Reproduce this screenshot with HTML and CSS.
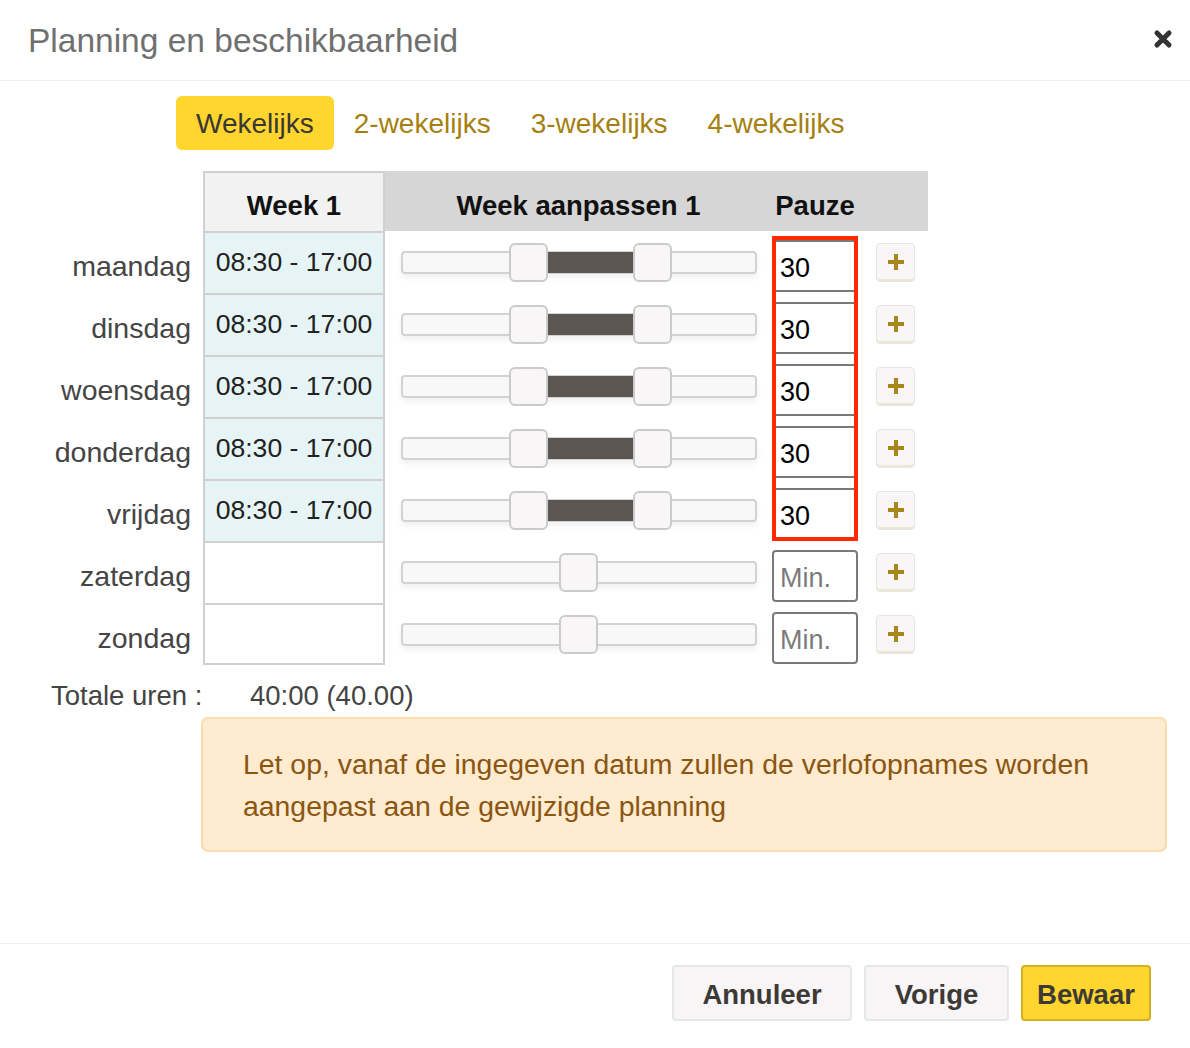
FILE: index.html
```html
<!DOCTYPE html>
<html lang="nl">
<head>
<meta charset="utf-8">
<title>Planning en beschikbaarheid</title>
<link rel="stylesheet" href="styles.css">
</head>
<body>
<div class="modal">
  <header class="modal-header">
    <h1 class="modal-title">Planning en beschikbaarheid</h1>
    <button class="close" aria-label="Sluiten">
      <svg width="20" height="20" viewBox="0 0 20 20"><path d="M4 4 L16 16 M16 4 L4 16" stroke="#333" stroke-width="5" stroke-linecap="round"/></svg>
    </button>
  </header>

  <div class="tabs">
    <span class="tab active">Wekelijks</span>
    <span class="tab">2-wekelijks</span>
    <span class="tab">3-wekelijks</span>
    <span class="tab">4-wekelijks</span>
  </div>

  <div class="grid">
    <div class="hd-empty"></div>
    <div class="hd-week">Week 1</div>
    <div class="hd-gray">Week aanpassen 1</div>
    <div class="hd-gray">Pauze</div>
    <div class="hd-gray"></div>

    <div class="day">maandag</div>
    <div class="time">08:30 - 17:00</div>
    <div class="slider-cell"><div class="slider"><span class="fill" style="left:146px;width:86px"></span><span class="handle" style="left:108px"></span><span class="handle" style="left:232px"></span></div></div>
    <div class="pause-cell"><input class="pause" value="30"></div>
    <div class="plus-cell"><button class="plus"><svg width="18" height="18" viewBox="0 0 18 18"><path d="M9 1 V17 M1 9 H17" stroke="#a8861b" stroke-width="4"/></svg></button></div>

    <div class="day">dinsdag</div>
    <div class="time">08:30 - 17:00</div>
    <div class="slider-cell"><div class="slider"><span class="fill" style="left:146px;width:86px"></span><span class="handle" style="left:108px"></span><span class="handle" style="left:232px"></span></div></div>
    <div class="pause-cell"><input class="pause" value="30"></div>
    <div class="plus-cell"><button class="plus"><svg width="18" height="18" viewBox="0 0 18 18"><path d="M9 1 V17 M1 9 H17" stroke="#a8861b" stroke-width="4"/></svg></button></div>

    <div class="day">woensdag</div>
    <div class="time">08:30 - 17:00</div>
    <div class="slider-cell"><div class="slider"><span class="fill" style="left:146px;width:86px"></span><span class="handle" style="left:108px"></span><span class="handle" style="left:232px"></span></div></div>
    <div class="pause-cell"><input class="pause" value="30"></div>
    <div class="plus-cell"><button class="plus"><svg width="18" height="18" viewBox="0 0 18 18"><path d="M9 1 V17 M1 9 H17" stroke="#a8861b" stroke-width="4"/></svg></button></div>

    <div class="day">donderdag</div>
    <div class="time">08:30 - 17:00</div>
    <div class="slider-cell"><div class="slider"><span class="fill" style="left:146px;width:86px"></span><span class="handle" style="left:108px"></span><span class="handle" style="left:232px"></span></div></div>
    <div class="pause-cell"><input class="pause" value="30"></div>
    <div class="plus-cell"><button class="plus"><svg width="18" height="18" viewBox="0 0 18 18"><path d="M9 1 V17 M1 9 H17" stroke="#a8861b" stroke-width="4"/></svg></button></div>

    <div class="day">vrijdag</div>
    <div class="time">08:30 - 17:00</div>
    <div class="slider-cell"><div class="slider"><span class="fill" style="left:146px;width:86px"></span><span class="handle" style="left:108px"></span><span class="handle" style="left:232px"></span></div></div>
    <div class="pause-cell"><input class="pause" value="30"></div>
    <div class="plus-cell"><button class="plus"><svg width="18" height="18" viewBox="0 0 18 18"><path d="M9 1 V17 M1 9 H17" stroke="#a8861b" stroke-width="4"/></svg></button></div>

    <div class="day">zaterdag</div>
    <div class="time empty"></div>
    <div class="slider-cell"><div class="slider"><span class="handle" style="left:158px"></span></div></div>
    <div class="pause-cell"><input class="pause" placeholder="Min."></div>
    <div class="plus-cell"><button class="plus"><svg width="18" height="18" viewBox="0 0 18 18"><path d="M9 1 V17 M1 9 H17" stroke="#a8861b" stroke-width="4"/></svg></button></div>

    <div class="day">zondag</div>
    <div class="time empty last"></div>
    <div class="slider-cell"><div class="slider"><span class="handle" style="left:158px"></span></div></div>
    <div class="pause-cell"><input class="pause" placeholder="Min."></div>
    <div class="plus-cell"><button class="plus"><svg width="18" height="18" viewBox="0 0 18 18"><path d="M9 1 V17 M1 9 H17" stroke="#a8861b" stroke-width="4"/></svg></button></div>

    <div class="highlight"></div>
  </div>

  <div class="total">
    <span class="total-label">Totale uren :</span>
    <span class="total-value">40:00 (40.00)</span>
  </div>

  <div class="warning">Let op, vanaf de ingegeven datum zullen de verlofopnames worden aangepast aan de gewijzigde planning</div>

  <footer class="modal-footer">
    <button class="btn btn-cancel">Annuleer</button>
    <button class="btn btn-prev">Vorige</button>
    <button class="btn btn-save">Bewaar</button>
  </footer>
</div>
</body>
</html>
```

FILE: styles.css
```css
* { box-sizing: border-box; }
html, body { margin: 0; padding: 0; background: #fff; }
body {
  font-family: "Liberation Sans", Arial, Helvetica, sans-serif;
  color: #333;
  width: 1190px;
}

.modal-header {
  height: 81px;
  border-bottom: 1px solid #f0f0f0;
  display: flex;
  align-items: center;
  justify-content: space-between;
  padding: 0 16px 0 28px;
}
.modal-title {
  margin: 0;
  font-weight: normal;
  font-size: 33.5px;
  color: #707070;
  line-height: 40px;
  padding-top: 1px;
}
.close {
  border: 0;
  background: none;
  padding: 0;
  width: 22px;
  height: 22px;
  display: flex;
  align-items: center;
  justify-content: center;
  margin-bottom: 2px;
}

.tabs {
  display: flex;
  padding-left: 176px;
  margin-top: 15px;
  height: 54px;
}
.tab {
  padding: 0 20px;
  display: flex;
  align-items: center;
  font-size: 28px;
  color: #a57f10;
  border-radius: 6px;
  padding-top: 1px;
}
.tab.active {
  background: #ffd52e;
  color: #3a3836;
}

.grid {
  position: relative;
  margin-top: 21px;
  display: grid;
  grid-template-columns: 203px 182px 387px 86px 70px;
  grid-template-rows: 60px repeat(7, 62px);
}
.hd-week {
  background: #f2f2f2;
  border: 2px solid #d0d0d0;
  border-bottom: 0;
  font-weight: bold;
  font-size: 27.5px;
  color: #111;
  display: flex;
  align-items: center;
  justify-content: center;
  padding-top: 8px;
}
.hd-gray {
  background: #d6d6d6;
  font-weight: bold;
  font-size: 27.5px;
  color: #111;
  display: flex;
  align-items: center;
  justify-content: center;
  padding-top: 10px;
}

.day {
  text-align: right;
  padding-right: 12px;
  font-size: 28.5px;
  color: #454545;
  display: flex;
  align-items: center;
  justify-content: flex-end;
  padding-top: 8px;
}
.time {
  background: #e6f4f5;
  border: 2px solid #d0d0d0;
  border-bottom: 0;
  font-size: 26.6px;
  color: #222;
  display: flex;
  align-items: center;
  justify-content: center;
  padding-bottom: 2px;
}
.time.empty { background: #fff; }
.time.last { border-bottom: 2px solid #d0d0d0; }

.slider-cell {
  display: flex;
  align-items: center;
  padding-left: 16px;
}
.slider {
  position: relative;
  width: 356px;
  height: 23px;
  border: 2px solid #d2d2d2;
  border-radius: 4px;
  background: #f8f8f8;
  box-shadow: 0 4px 6px rgba(0,0,0,0.06);
}
.fill {
  position: absolute;
  top: -1px;
  bottom: -1px;
  background: #5c5653;
  margin-left: -2px;
}
.handle {
  position: absolute;
  top: -10px;
  width: 39px;
  height: 39px;
  margin-left: -2px;
  border: 2px solid #cbcbcb;
  border-radius: 6px;
  background: #f8f6f7;
}

.pause-cell {
  display: flex;
  align-items: flex-end;
  padding-bottom: 1px;
}
.pause {
  width: 86px;
  height: 52px;
  border: 2px solid #7a7a7a;
  border-radius: 4px;
  font-family: "Liberation Sans", Arial, sans-serif;
  font-size: 27px;
  color: #000;
  padding: 4px 0 0 6px;
  background: #fff;
  outline: none;
}
.pause::placeholder { color: #7b7b7b; }

.plus-cell {
  display: flex;
  align-items: center;
  padding-left: 18px;
}
.plus {
  width: 39px;
  height: 39px;
  border: 1px solid #e6e4e4;
  border-radius: 4px;
  background: #f8f6f6;
  padding: 0;
  display: flex;
  align-items: center;
  justify-content: center;
  box-shadow: inset 0 -2px 0 rgba(220,200,150,0.35);
}

.highlight {
  position: absolute;
  left: 772px;
  top: 65px;
  width: 86px;
  height: 305px;
  border: 4px solid #ff2a00;
  pointer-events: none;
}

.total {
  display: flex;
  align-items: center;
  padding-left: 51px;
  padding-top: 10px;
  height: 52px;
  font-size: 27.5px;
  color: #444;
  line-height: 36px;
}
.total-label { width: 199px; }

.warning {
  margin: 0 23px 0 201px;
  background: #feebd0;
  border: 2px solid #fbdcac;
  border-radius: 7px;
  padding: 24px 30px 23px 40px;
  font-size: 28.4px;
  line-height: 42px;
  color: #8a5612;
}

.modal-footer {
  margin-top: 91px;
  border-top: 1px solid #f0f0f0;
  display: flex;
  justify-content: flex-end;
  gap: 12px;
  padding: 21px 39px 0 0;
}
.btn {
  height: 56px;
  border: 2px solid #e6e6e6;
  border-radius: 4px;
  background: #f7f5f6;
  font-family: "Liberation Sans", Arial, sans-serif;
  font-weight: bold;
  font-size: 27.5px;
  color: #3d3936;
  padding: 4px 0 0 0;
}
.btn-cancel { width: 180px; }
.btn-prev { width: 145px; }
.btn-save {
  width: 130px;
  background: #ffd52e;
  border-color: #d6b022;
}
```
